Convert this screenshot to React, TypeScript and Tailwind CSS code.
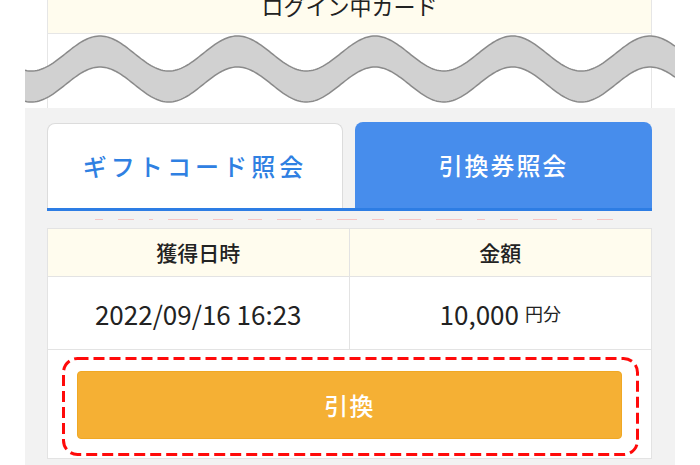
const font = { fontFamily: '"Noto Sans CJK JP", "Noto Sans", sans-serif' };

function wavePath() {
  const top: string[] = [];
  const bottom: string[] = [];
  for (let x = 0; x <= 650; x += 2) {
    const X = x + 25;
    const y = 23.5 - 17.5 * Math.cos((2 * Math.PI * (X - 100)) / 137.5);
    top.push(`${x},${y.toFixed(2)}`);
    bottom.push(`${x},${(y + 31).toFixed(2)}`);
  }
  return {
    fill: `M${top.join(" L")} L${bottom.slice().reverse().join(" L")} Z`,
    top: `M${top.join(" L")}`,
    bottom: `M${bottom.join(" L")}`,
  };
}

function Wave() {
  const p = wavePath();
  return (
    <svg className="absolute left-[25px] top-[30px]" width="650" height="80" viewBox="0 0 650 80">
      <path d={p.fill} fill="#d1d1d1" />
      <path d={p.top} fill="none" stroke="#8a8a8a" strokeWidth="1.5" />
      <path d={p.bottom} fill="none" stroke="#8a8a8a" strokeWidth="1.5" />
    </svg>
  );
}

const dashes = [8, 16, 4, 30, 20, 14, 24, 6, 20, 12, 22, 26, 8, 18, 24, 10, 16];

export default function App() {
  return (
    <div className="relative w-[700px] h-[465px] overflow-hidden bg-white" style={font}>
      {/* card shown above the cut */}
      <div className="ml-[47px] w-[605px] -mt-[22px] h-[130px] border-x border-[#e6e6e6] bg-white">
        <div className="h-[56px] bg-[#fffcee] border-b border-[#e6e6e6] flex items-center justify-center text-[22px] text-[#222]">
          ログイン中カード
        </div>
      </div>

      <Wave />

      <div className="ml-[25px] w-[650px] bg-[#f2f2f2] pt-[14px] pl-[22px] pr-[23px] h-[400px]">
        <div className="flex gap-[12px] items-end">
          <div className="w-[296px] h-[85px] bg-white border border-b-0 border-[#dcdcdc] rounded-t-[8px] flex items-center justify-center text-[24px] font-medium tracking-[0.17em] text-[#2f80e2]">
            ギフトコード照会
          </div>
          <div className="w-[297px] h-[86px] bg-[#478dec] rounded-t-[8px] flex items-center justify-center text-[24px] font-medium tracking-[0.08em] text-white">
            引換券照会
          </div>
        </div>
        <div className="h-[3px] bg-[#2d7de4]" />
        <div className="h-[17px] flex items-center gap-[15px] pl-[48px]">
          {dashes.map((w, i) => (
            <span key={i} className="h-[1px] bg-[#f6c4c4]" style={{ width: w }} />
          ))}
        </div>

        <div className="border border-[#e3e3e3] bg-white">
          <div className="grid grid-cols-2 h-[48px] bg-[#fffcee] border-b border-[#e3e3e3] text-[21px] font-medium text-[#222]">
            <div className="flex items-center justify-center border-r border-[#e3e3e3]">獲得日時</div>
            <div className="flex items-center justify-center">金額</div>
          </div>
          <div className="grid grid-cols-2 h-[73px] border-b border-[#e3e3e3] text-[#222]">
            <div className="flex items-center justify-center border-r border-[#e3e3e3] text-[26px]">2022/09/16 16:23</div>
            <div className="flex items-center justify-center text-[26px]">
              10,000<span className="ml-[6px] text-[18px]">円分</span>
            </div>
          </div>
          <div className="px-[14px] pt-[7px] pb-[5px]">
            <div className="relative px-[15px] py-[14px]">
              <svg className="absolute inset-0" width="577" height="99" viewBox="0 0 577 99">
                <rect x="1.5" y="1.5" width="574" height="96" rx="14" fill="none" stroke="#ff0a0a" strokeWidth="3" strokeDasharray="11 5" />
              </svg>
              <button className="w-full h-[68px] rounded-[4px] bg-[#f5b034] border border-[#f0a824] text-white text-[24px] font-medium tracking-[0.05em] flex items-center justify-center">
                引換
              </button>
            </div>
          </div>
        </div>
      </div>
    </div>
  );
}
